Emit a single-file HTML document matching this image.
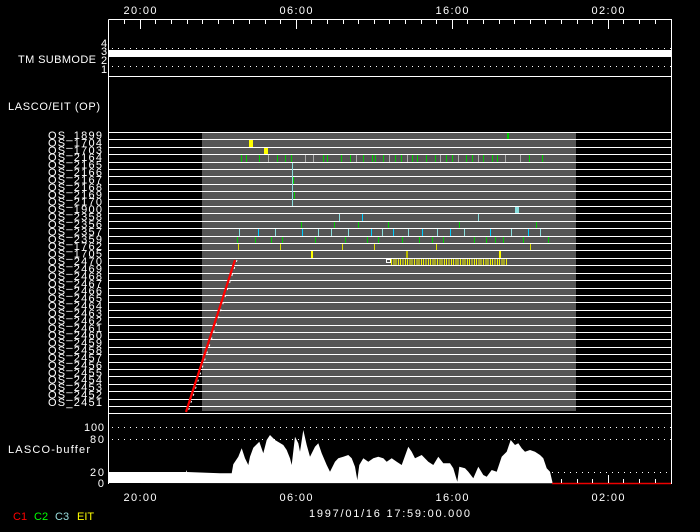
<!DOCTYPE html>
<html><head><meta charset="utf-8"><style>
html,body{margin:0;padding:0;background:#000;width:700px;height:532px;overflow:hidden}
svg{display:block}
text{font-family:"Liberation Sans",sans-serif;fill:#fff;font-size:11px}
</style></head><body>
<svg width="700" height="532" viewBox="0 0 700 532" xmlns="http://www.w3.org/2000/svg">
<rect width="700" height="532" fill="#000"/>
<rect x="202" y="132" width="374" height="279" fill="#555"/>
<g stroke="#fff" stroke-width="1" fill="none" shape-rendering="crispEdges">
<path d="M108.5 19.5H671.5V484M108.5 19.5V484M108 76.5H671"/>
</g>
<g stroke="#fff" stroke-width="1" shape-rendering="crispEdges">
<path d="M124.5 19v5M140.5 19v10M155.5 19v5M171.5 19v5M187.5 19v5M202.5 19v5M218.5 19v5M233.5 19v5M249.5 19v5M265.5 19v5M280.5 19v5M296.5 19v10M311.5 19v5M327.5 19v5M343.5 19v5M358.5 19v5M374.5 19v5M389.5 19v5M405.5 19v5M421.5 19v5M436.5 19v5M452.5 19v10M467.5 19v5M483.5 19v5M499.5 19v5M514.5 19v5M530.5 19v5M545.5 19v5M561.5 19v5M577.5 19v5M592.5 19v5M608.5 19v10M623.5 19v5M639.5 19v5M655.5 19v5"/>
</g>
<text x="140" y="14" text-anchor="middle" textLength="33">20:00</text>
<text x="296" y="14" text-anchor="middle" textLength="33">06:00</text>
<text x="452" y="14" text-anchor="middle" textLength="33">16:00</text>
<text x="608" y="14" text-anchor="middle" textLength="33">02:00</text>
<rect x="109" y="50" width="562" height="7" fill="#fff"/>
<g stroke="#fff" stroke-dasharray="1 5" stroke-width="1" shape-rendering="crispEdges">
<path d="M112 48.5H671M112 66.5H671"/>
</g>
<text x="18" y="63" textLength="78">TM SUBMODE</text>
<text x="101" y="47" font-size="9">4</text>
<text x="101" y="55" font-size="9">3</text>
<text x="101" y="64" font-size="9">2</text>
<text x="101" y="73" font-size="9">1</text>
<text x="8" y="110" textLength="92">LASCO/EIT (OP)</text>
<g stroke="#fff" stroke-width="1" shape-rendering="crispEdges">
<path d="M109 132.5H671M109 139.5H671M109 147.5H671M109 154.5H671M109 162.5H671M109 169.5H671M109 176.5H671M109 184.5H671M109 191.5H671M109 199.5H671M109 206.5H671M109 213.5H671M109 221.5H671M109 228.5H671M109 236.5H671M109 243.5H671M109 250.5H671M109 258.5H671M109 265.5H671M109 273.5H671M109 280.5H671M109 288.5H671M109 295.5H671M109 302.5H671M109 310.5H671M109 317.5H671M109 325.5H671M109 332.5H671M109 339.5H671M109 347.5H671M109 354.5H671M109 362.5H671M109 369.5H671M109 376.5H671M109 384.5H671M109 391.5H671M109 399.5H671M109 406.5H671M109 413.5H671"/>
</g>
<g text-anchor="end" font-size="10">
<text x="102" y="139" textLength="54">OS_1899</text>
<text x="102" y="146.4" textLength="54">OS_1704</text>
<text x="102" y="153.8" textLength="54">OS_1703</text>
<text x="102" y="161.2" textLength="54">OS_2164</text>
<text x="102" y="168.7" textLength="54">OS_2165</text>
<text x="102" y="176.1" textLength="54">OS_2166</text>
<text x="102" y="183.5" textLength="54">OS_2167</text>
<text x="102" y="190.9" textLength="54">OS_2168</text>
<text x="102" y="198.3" textLength="54">OS_2169</text>
<text x="102" y="205.7" textLength="54">OS_2170</text>
<text x="102" y="213.2" textLength="54">OS_1900</text>
<text x="102" y="220.6" textLength="54">OS_2358</text>
<text x="102" y="228" textLength="54">OS_2356</text>
<text x="102" y="235.4" textLength="54">OS_2357</text>
<text x="102" y="242.8" textLength="54">OS_2359</text>
<text x="102" y="250.2" textLength="54">OS_1762</text>
<text x="102" y="257.7" textLength="54">OS_1705</text>
<text x="102" y="265.1" textLength="54">OS_2470</text>
<text x="102" y="272.5" textLength="54">OS_2469</text>
<text x="102" y="279.9" textLength="54">OS_2468</text>
<text x="102" y="287.3" textLength="54">OS_2467</text>
<text x="102" y="294.7" textLength="54">OS_2466</text>
<text x="102" y="302.1" textLength="54">OS_2465</text>
<text x="102" y="309.6" textLength="54">OS_2464</text>
<text x="102" y="317" textLength="54">OS_2463</text>
<text x="102" y="324.4" textLength="54">OS_2462</text>
<text x="102" y="331.8" textLength="54">OS_2461</text>
<text x="102" y="339.2" textLength="54">OS_2460</text>
<text x="102" y="346.6" textLength="54">OS_2459</text>
<text x="102" y="354.1" textLength="54">OS_2458</text>
<text x="102" y="361.5" textLength="54">OS_2457</text>
<text x="102" y="368.9" textLength="54">OS_2456</text>
<text x="102" y="376.3" textLength="54">OS_2455</text>
<text x="102" y="383.7" textLength="54">OS_2454</text>
<text x="102" y="391.1" textLength="54">OS_2453</text>
<text x="102" y="398.6" textLength="54">OS_2452</text>
<text x="102" y="406" textLength="54">OS_2451</text>
</g>
<g shape-rendering="crispEdges">
<rect x="507" y="133" width="2" height="6" fill="#0c0"/>
<rect x="249" y="140" width="4" height="7" fill="#ff0"/>
<rect x="264" y="148" width="4" height="6" fill="#ff0"/>
<path stroke="#0c0" stroke-width="1" d="M241.5 155v7M246.5 155v7M259.5 155v7M277.5 155v7M285.5 155v7M291.5 155v7M323.5 155v7M327.5 155v7M341.5 155v7M350.5 155v7M363.5 155v7M372.5 155v7M375.5 155v7M383.5 155v7M395.5 155v7M401.5 155v7M412.5 155v7M417.5 155v7M426.5 155v7M435.5 155v7M446.5 155v7M452.5 155v7M466.5 155v7M472.5 155v7M483.5 155v7M492.5 155v7M497.5 155v7M529.5 155v7M542.5 155v7"/>
<path stroke="#aaa" stroke-width="1" d="M268.5 155v7M305.5 155v7M313.5 155v7M356.5 155v7M389.5 155v7M407.5 155v7M440.5 155v7M458.5 155v7M478.5 155v7M505.5 155v7M520.5 155v7"/>
<path stroke="#8dd" stroke-width="1" d="M292.5 163v43"/>
<path stroke="#0c0" stroke-width="1" d="M293.5 177v7M294.5 192v7"/>
<rect x="515" y="207" width="4" height="6" fill="#8dd"/>
<path stroke="#8dd" stroke-width="1" d="M339.5 214v7M478.5 214v7"/>
<path stroke="#0cf" stroke-width="1" d="M362.5 214v7"/>
<path stroke="#0c0" stroke-width="1" d="M301.5 222v6M334.5 222v6M358.5 222v6M388.5 222v6M459.5 222v6M536.5 222v6"/>
<path stroke="#8dd" stroke-width="1" d="M239.5 229v7M275.5 229v7M318.5 229v7M331.5 229v7M348.5 229v7M382.5 229v7M408.5 229v7M437.5 229v7M464.5 229v7M511.5 229v7M540.5 229v7"/>
<path stroke="#0cf" stroke-width="1" d="M258.5 229v7M302.5 229v7M371.5 229v7M393.5 229v7M422.5 229v7M450.5 229v7M490.5 229v7M528.5 229v7"/>
<path stroke="#0c0" stroke-width="1" d="M237.5 237v6M255.5 237v6M271.5 237v6M282.5 237v6M315.5 237v6M345.5 237v6M367.5 237v6M378.5 237v6M402.5 237v6M419.5 237v6M432.5 237v6M443.5 237v6M474.5 237v6M486.5 237v6M495.5 237v6M503.5 237v6M523.5 237v6M548.5 237v6"/>
<path stroke="#dd0" stroke-width="1" d="M238.5 244v6M280.5 244v6M342.5 244v6M374.5 244v6M436.5 244v6M530.5 244v6"/>
<rect x="311" y="251" width="2" height="7" fill="#ff0"/>
<rect x="406" y="251" width="2" height="7" fill="#bb0"/>
<rect x="499" y="251" width="2" height="7" fill="#ff0"/>
<path stroke="#ee0" stroke-width="6" stroke-dasharray="1 1.3" d="M391 262H507"/>
<rect x="386.5" y="259.5" width="4" height="3" fill="none" stroke="#fff" stroke-width="1"/>
</g>
<path d="M235 260L186 412" stroke="#f00" stroke-width="2.2"/>
<path d="M237 260L188 412" stroke="#fff" stroke-width="1" stroke-dasharray="2 5.4"/>
<g stroke="#fff" stroke-dasharray="1 5" stroke-width="1" shape-rendering="crispEdges">
<path d="M112 427.5H671M112 439.5H671M552 472.5H671"/>
</g>
<polygon fill="#fff" points="109,483 109,472 186,472 186,470 187,472 220,473.3 231.7,473.3 233.3,464.3 238.3,456.7 241.7,448.3 245,458.3 248.3,465 250,456.7 253.3,447.7 259.3,441.7 263.3,453.3 266.7,440 270,435 275,440 283.3,445 286.7,450 290,458.3 291.7,465 295,436.7 298.3,443.3 300,451.7 303.3,430 306.7,445 310,456.7 315,446.7 318.3,443.3 321.7,453.3 326.7,465 330,471.7 335,461.7 338.3,458.3 343.3,456.7 348.3,455 351.7,458.3 355,466.7 357.3,480 359.3,465 363.3,458.3 368.3,461.7 373.3,458.3 378.3,456.7 383.3,458.3 386.7,461.7 391.7,458.3 396.7,461.7 401.7,465 408.3,446.7 411.7,451.7 415,458.3 421.7,455 428.3,461.7 433.3,465 438.3,456.7 443.3,463.3 450,463.3 453.3,468.3 457.3,481.7 459.3,466.7 465,468.3 468.3,471.7 473.3,478.3 478.3,466.7 483.3,475 486.7,476.7 491.7,470 496.7,471.7 501.7,456.7 506.7,451.7 510.7,440 515,445 518.3,443.3 521.7,448.3 525,451.7 530,450 535,451.7 540,455 543.3,458.3 546.7,468.3 550,471.7 552.7,483.3"/>
<path d="M552 483.5H671" stroke="#e00" stroke-width="1.5"/>
<g stroke="#fff" stroke-width="1" shape-rendering="crispEdges">
<path d="M561.5 483v-4M577.5 483v-4M592.5 483v-4M608.5 483v-8M623.5 483v-4M639.5 483v-4M655.5 483v-4"/>
</g>
<text x="104" y="431" text-anchor="end" textLength="20">100</text>
<text x="104" y="443" text-anchor="end" textLength="14">80</text>
<text x="8" y="453" textLength="82">LASCO-buffer</text>
<text x="104" y="476" text-anchor="end" textLength="14">20</text>
<text x="104" y="487" text-anchor="end">0</text>
<text x="140" y="501" text-anchor="middle" textLength="33">20:00</text>
<text x="296" y="501" text-anchor="middle" textLength="33">06:00</text>
<text x="452" y="501" text-anchor="middle" textLength="33">16:00</text>
<text x="608" y="501" text-anchor="middle" textLength="33">02:00</text>
<text x="309" y="517" textLength="161">1997/01/16 17:59:00.000</text>
<text x="13" y="520" font-size="9" style="fill:#f00">C1</text>
<text x="34" y="520" font-size="9" style="fill:#0f0">C2</text>
<text x="55" y="520" font-size="9" style="fill:#9dd">C3</text>
<text x="77" y="520" font-size="9" style="fill:#ff0">EIT</text>
</svg>
</body></html>
